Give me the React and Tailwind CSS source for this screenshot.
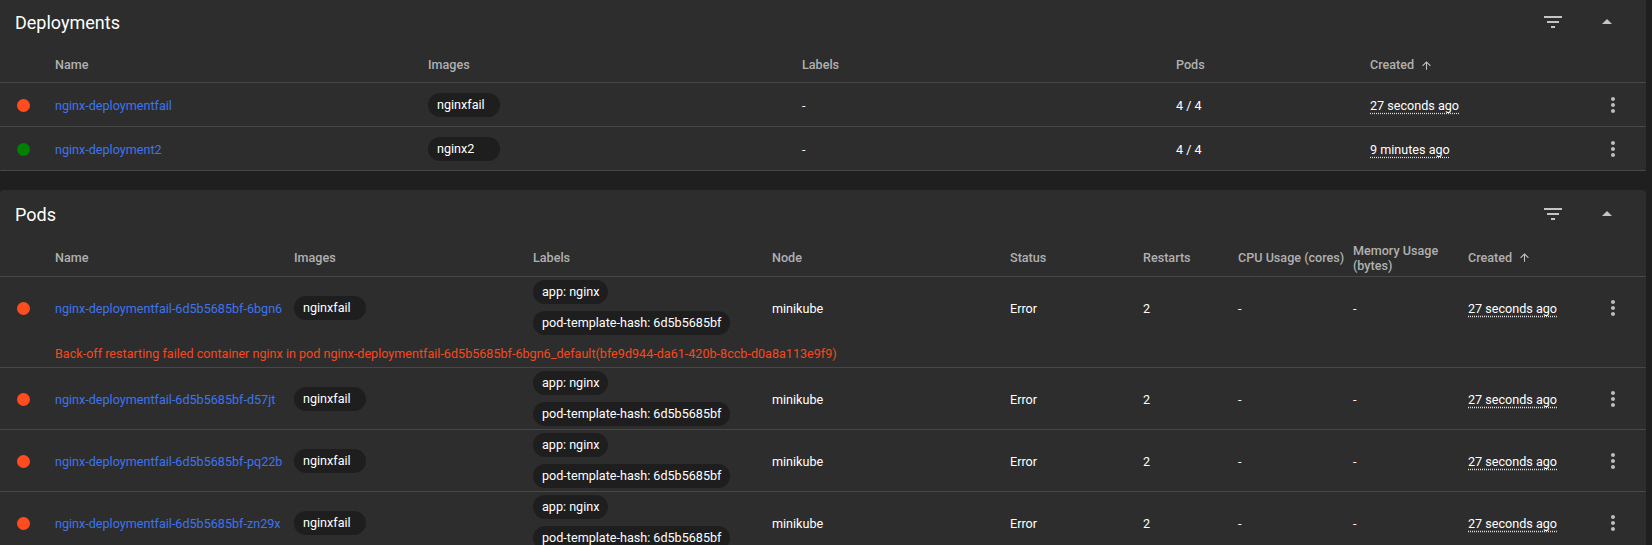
import React from "react";

const deployments = [
  { ok: false, name: "nginx-deploymentfail", image: "nginxfail", pods: "4 / 4", created: "27 seconds ago" },
  { ok: true, name: "nginx-deployment2", image: "nginx2", pods: "4 / 4", created: "9 minutes ago" },
];

const pods = [
  {
    name: "nginx-deploymentfail-6d5b5685bf-6bgn6",
    error:
      "Back-off restarting failed container nginx in pod nginx-deploymentfail-6d5b5685bf-6bgn6_default(bfe9d944-da61-420b-8ccb-d0a8a113e9f9)",
  },
  { name: "nginx-deploymentfail-6d5b5685bf-d57jt" },
  { name: "nginx-deploymentfail-6d5b5685bf-pq22b" },
  { name: "nginx-deploymentfail-6d5b5685bf-zn29x" },
];

const depCols = "grid grid-cols-[55px_373px_374px_374px_194px_220px_46px]";
const podCols = "grid grid-cols-[55px_239px_239px_239px_238px_133px_95px_115px_115px_122px_46px]";

const FilterIcon = () => (
  <svg width="24" height="24" viewBox="0 0 24 24" fill="#c4c4c4">
    <path d="M10 18h4v-2h-4v2zM3 6v2h18V6H3zm3 7h12v-2H6v2z" />
  </svg>
);

const CollapseIcon = () => (
  <svg width="24" height="24" viewBox="0 0 24 24" fill="#c4c4c4">
    <path d="M7 14l5-5 5 5z" />
  </svg>
);

const MoreIcon = () => (
  <svg width="24" height="24" viewBox="0 0 24 24" fill="#bdbdbd">
    <path d="M12 8c1.1 0 2-.9 2-2s-.9-2-2-2-2 .9-2 2 .9 2 2 2zm0 2c-1.1 0-2 .9-2 2s.9 2 2 2 2-.9 2-2-.9-2-2-2zm0 6c-1.1 0-2 .9-2 2s.9 2 2 2 2-.9 2-2-.9-2-2-2z" />
  </svg>
);

const SortArrow = () => (
  <svg width="13" height="13" viewBox="0 0 24 24" fill="#c4c4c4" className="ml-[6px]">
    <path d="M4 12l1.41 1.41L11 7.83V20h2V7.83l5.58 5.59L20 12l-8-8-8 8z" />
  </svg>
);

const Dot = ({ ok }) => (
  <div className="flex items-center pl-[17px] pt-[1px]">
    <span className={`block w-[13px] h-[13px] rounded-full ${ok ? "bg-[#008000]" : "bg-[#ff4d1f]"}`} />
  </div>
);

const Chip = ({ children }) => (
  <span className="inline-flex items-center h-[24px] min-w-[72px] px-[9px] rounded-full bg-[#1e1e1e] text-white whitespace-nowrap">
    {children}
  </span>
);

const Ago = ({ children }) => (
  <span className="underline decoration-dotted decoration-[#dddddd] underline-offset-[3px]">{children}</span>
);

// text cells sit a touch below the geometric centre, like the original
const Cell = ({ children, className = "" }) => (
  <div className={`flex items-center pt-[3px] ${className}`}>{children}</div>
);

const CardTitle = ({ title, className }) => (
  <div className={`flex items-center justify-between pl-[15px] pr-[27px] ${className}`}>
    <h2 className="text-[18px] text-white font-normal">{title}</h2>
    <div className="flex items-center gap-[30px]">
      <FilterIcon />
      <CollapseIcon />
    </div>
  </div>
);

const Head = ({ children }) => <div className="flex items-center">{children}</div>;

export default function App() {
  return (
    <div className="h-[545px] w-[1652px] overflow-hidden bg-[#1f1f1f] font-['Roboto',sans-serif] text-[12.6px] text-white">
      {/* Deployments */}
      <div className="w-[1646px] bg-[#2d2d2d] rounded-b-[4px]">
        <CardTitle title="Deployments" className="h-[44px]" />
        <div className={`${depCols} h-[39px] pt-[4px] border-b border-[#474747] font-medium text-[#b0b0b0]`}>
          <div />
          <Head>Name</Head>
          <Head>Images</Head>
          <Head>Labels</Head>
          <Head>Pods</Head>
          <Head>
            Created
            <SortArrow />
          </Head>
          <div />
        </div>
        {deployments.map((d) => (
          <div key={d.name} className={`${depCols} h-[44px] border-b border-[#474747]`}>
            <Dot ok={d.ok} />
            <Cell className="text-[#3d74ee]">{d.name}</Cell>
            <div className="flex items-center pt-[1px]">
              <Chip>{d.image}</Chip>
            </div>
            <Cell>-</Cell>
            <Cell>{d.pods}</Cell>
            <Cell>
              <Ago>{d.created}</Ago>
            </Cell>
            <div className="flex items-center justify-center pt-[1px]">
              <MoreIcon />
            </div>
          </div>
        ))}
      </div>

      {/* Pods */}
      <div className="mt-[19px] w-[1646px] bg-[#2d2d2d] rounded-t-[4px]">
        <CardTitle title="Pods" className="h-[48px]" />
        <div className={`${podCols} h-[39px] pt-[1px] border-b border-[#474747] font-medium text-[#b0b0b0] leading-[15px]`}>
          <div />
          <Head>Name</Head>
          <Head>Images</Head>
          <Head>Labels</Head>
          <Head>Node</Head>
          <Head>Status</Head>
          <Head>Restarts</Head>
          <Head>
            <span className="whitespace-nowrap">CPU Usage (cores)</span>
          </Head>
          <Head>Memory Usage (bytes)</Head>
          <Head>
            Created
            <SortArrow />
          </Head>
          <div />
        </div>
        {pods.map((p) => (
          <div key={p.name} className="border-b border-[#474747]">
            <div className={`${podCols} h-[61px]`}>
              <Dot ok={false} />
              <Cell className="text-[#3d74ee] whitespace-nowrap">{p.name}</Cell>
              <div className="flex items-center pt-[1px]">
                <Chip>nginxfail</Chip>
              </div>
              <div className="flex flex-col justify-center items-start gap-[7px]">
                <Chip>app: nginx</Chip>
                <Chip>pod-template-hash: 6d5b5685bf</Chip>
              </div>
              <Cell>minikube</Cell>
              <Cell>Error</Cell>
              <Cell>2</Cell>
              <Cell>-</Cell>
              <Cell>-</Cell>
              <Cell>
                <Ago>27 seconds ago</Ago>
              </Cell>
              <div className="flex items-center justify-center pt-[1px]">
                <MoreIcon />
              </div>
            </div>
            {p.error && (
              <div className="h-[29px] pt-[3px] pl-[55px] flex items-center text-[#f4491f]">{p.error}</div>
            )}
          </div>
        ))}
      </div>
    </div>
  );
}
